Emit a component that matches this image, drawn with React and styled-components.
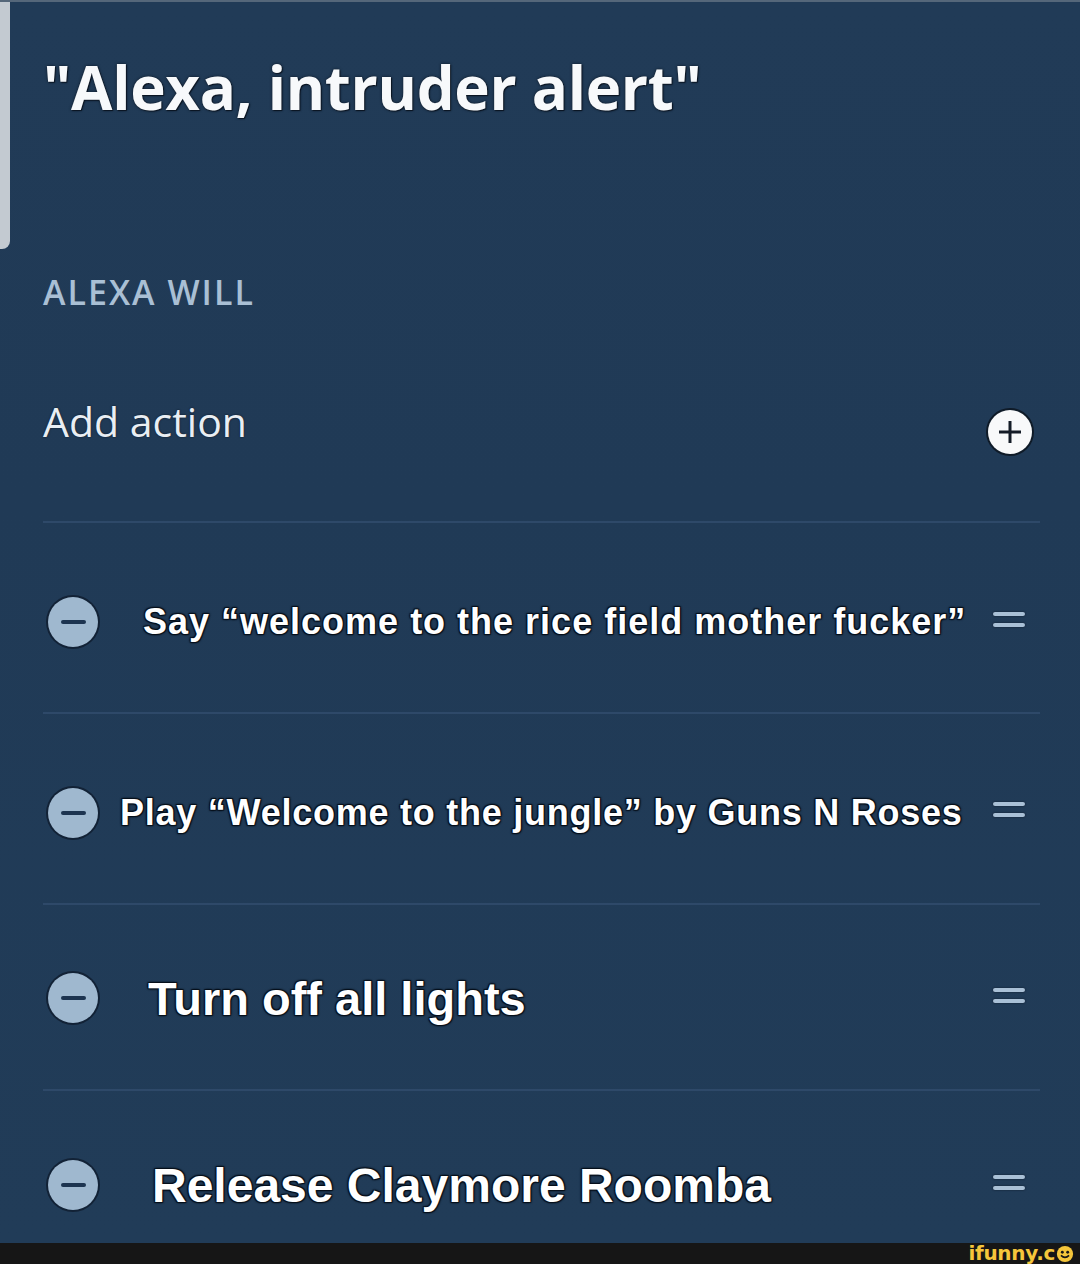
import React from "react";
import styled, { createGlobalStyle } from "styled-components";

const Global = createGlobalStyle`
  html, body { margin: 0; padding: 0; background: #203a56; }
  #root { width: 1080px; height: 1264px; }
`;

const Page = styled.div`
  width: 1080px;
  height: 1264px;
  display: flex;
  flex-direction: column;
  overflow: hidden;
`;

const Panel = styled.main`
  position: relative;
  flex: 1;
  min-height: 0;
  display: flex;
  flex-direction: column;
  padding: 0 40px 0 43px;
  background: linear-gradient(180deg, #213b57 0%, #203a56 40%, #213c58 100%);
  border-top: 2px solid #55677a;
  font-family: "Open Sans", "Liberation Sans", sans-serif;
`;

const ScrollThumb = styled.div`
  position: absolute;
  left: 0;
  top: 0;
  width: 10px;
  height: 247px;
  background: #c3cad1;
  border-bottom-right-radius: 8px;
`;

const Title = styled.h1`
  margin: 55px 0 0 0;
  font-size: 60px;
  line-height: 60px;
  font-weight: 700;
  color: #f7f9fb;
  letter-spacing: -0.3px;
  text-shadow: 0 0 3px #0b1522, 1px 1px 1px #0b1522;
`;

const Label = styled.div`
  margin-top: 158px;
  font-size: 34px;
  line-height: 34px;
  font-weight: 600;
  color: #a9bfd4;
  letter-spacing: 2px;
`;

const AddRow = styled.div`
  margin-top: 92px;
  display: flex;
  align-items: flex-start;
  justify-content: space-between;
`;

const AddText = styled.span`
  font-size: 41px;
  line-height: 40px;
  color: #e9eef3;
  text-shadow: 0 0 2px #0b1522;
`;

const PlusButton = styled.div`
  margin-top: 9px;
  margin-right: 8px;
  width: 44px;
  height: 44px;
  border-radius: 50%;
  background: #f8f9fa;
  box-shadow: 0 0 0 2px #0f1b28;
  display: flex;
  align-items: center;
  justify-content: center;
`;

const Divider = styled.div`
  flex: none;
  height: 2px;
  background: #2e4969;
  margin-top: ${(p) => p.$top || 0}px;
`;

const ActionRow = styled.div`
  flex: none;
  height: ${(p) => p.$height}px;
  padding-top: ${(p) => p.$pad}px;
  box-sizing: border-box;
  display: flex;
  align-items: center;
`;

const MinusButton = styled.div`
  flex: none;
  margin-left: 5px;
  width: 50px;
  height: 50px;
  border-radius: 50%;
  background: #9fb8cf;
  box-shadow: 0 0 0 2px #122236;
  display: flex;
  align-items: center;
  justify-content: center;
  &::after {
    content: "";
    width: 25px;
    height: 4px;
    border-radius: 2px;
    background: #1d3450;
  }
`;

const ActionText = styled.span`
  margin-left: ${(p) => p.$indent}px;
  flex: 1;
  font-family: "Liberation Sans", Arial, sans-serif;
  font-weight: 700;
  font-size: ${(p) => p.$size}px;
  letter-spacing: ${(p) => p.$spacing || 0}px;
  color: #ffffff;
  white-space: nowrap;
  text-shadow: 0 0 3px #07101b, 1px 1px 1px #07101b, -1px -1px 1px #07101b,
    1px -1px 1px #07101b, -1px 1px 1px #07101b;
`;

const Handle = styled.div`
  flex: none;
  margin-right: 15px;
  width: 32px;
  display: flex;
  flex-direction: column;
  gap: 7px;
  margin-top: ${(p) => p.$shift || 0}px;
  &::before,
  &::after {
    content: "";
    height: 4px;
    border-radius: 2px;
    background: #a9c0d6;
    box-shadow: 0 0 2px #0c1826;
  }
`;

const Footer = styled.footer`
  height: 21px;
  flex: none;
  background: #161616;
  display: flex;
  justify-content: flex-end;
  align-items: center;
  padding-right: 6px;
`;

const Brand = styled.span`
  display: flex;
  align-items: center;
  font-family: "DejaVu Sans", "Liberation Sans", sans-serif;
  font-weight: 700;
  font-size: 20px;
  line-height: 21px;
  color: #f5c63b;
  letter-spacing: -0.3px;
`;

const actions = [
  { text: "Say \u201cwelcome to the rice field mother fucker\u201d", size: 36, spacing: 1, indent: 45, h: 189, pad: 8, shift: -4 },
  { text: "Play \u201cWelcome to the jungle\u201d by Guns N Roses", size: 36, spacing: 0.75, indent: 22, h: 189, pad: 8, shift: -6 },
  { text: "Turn off all lights", size: 47, spacing: 0, indent: 50, h: 184, pad: 2, shift: -6 },
  { text: "Release Claymore Roomba", size: 48, spacing: 0, indent: 54, h: 152, pad: 36, shift: -6 },
];

export default function App() {
  return (
    <Page>
      <Global />
      <Panel>
        <ScrollThumb />
        <Title>"Alexa, intruder alert"</Title>
        <Label>ALEXA WILL</Label>
        <AddRow>
          <AddText>Add action</AddText>
          <PlusButton>
            <svg width="26" height="26" viewBox="0 0 26 26">
              <path d="M13 2v22M2 13h22" stroke="#141c27" strokeWidth="3" />
            </svg>
          </PlusButton>
        </AddRow>
        <Divider $top={67} />
        {actions.map((a, i) => (
          <React.Fragment key={i}>
            <ActionRow $height={a.h} $pad={a.pad}>
              <MinusButton />
              <ActionText $size={a.size} $spacing={a.spacing} $indent={a.indent}>
                {a.text}
              </ActionText>
              <Handle $shift={a.shift} />
            </ActionRow>
            {i < actions.length - 1 && <Divider />}
          </React.Fragment>
        ))}
      </Panel>
      <Footer>
        <Brand>
          ifunny.c
          <svg width="18" height="18" viewBox="0 0 20 20" style={{ marginLeft: 1 }}>
            <circle cx="10" cy="10" r="9" fill="#f5c63b" />
            <circle cx="7" cy="8" r="1.6" fill="#161616" />
            <circle cx="13" cy="8" r="1.6" fill="#161616" />
            <path d="M5.5 11.5 Q10 16 14.5 11.5" stroke="#161616" strokeWidth="1.8" fill="none" />
          </svg>
        </Brand>
      </Footer>
    </Page>
  );
}
